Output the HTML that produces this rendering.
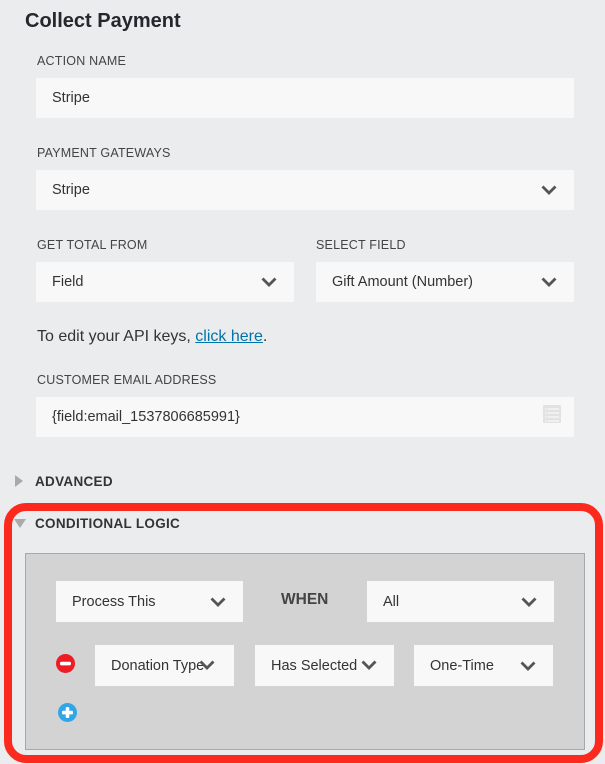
<!DOCTYPE html>
<html><head><style>
*{margin:0;padding:0;box-sizing:border-box}
body{width:605px;height:764px;background:#ebecee;font-family:"Liberation Sans",Arial,sans-serif;position:relative;overflow:hidden;color:#3a3a3a}
.a{position:absolute}
.lbl{position:absolute;left:37px;font-size:12.5px;color:#444;letter-spacing:.2px}
.in{position:absolute;background:#f8f8f8;font-size:14.5px;color:#333;padding-left:16px;display:flex;align-items:center}
.chev{position:absolute;right:17px;top:50%;margin-top:-5px}
.hd{position:absolute;font-size:13.5px;font-weight:bold;color:#333;letter-spacing:.3px}
</style></head><body>
<div class="a" style="left:25px;top:10px;font-size:20px;font-weight:bold;color:#23282d">Collect Payment</div>

<div class="lbl" style="top:54px">ACTION NAME</div>
<div class="in" style="left:36px;top:78px;width:538px;height:40px">Stripe</div>

<div class="lbl" style="top:146px">PAYMENT GATEWAYS</div>
<div class="in" style="left:36px;top:170px;width:538px;height:40px">Stripe<svg class="chev" width="16" height="10" viewBox="0 0 16 10"><path d="M1.5 1.5l6.5 6.5 6.5-6.5" stroke="#555" stroke-width="2.8" fill="none"/></svg></div>

<div class="lbl" style="top:238px">GET TOTAL FROM</div>
<div class="lbl" style="top:238px;left:316px">SELECT FIELD</div>
<div class="in" style="left:36px;top:262px;width:258px;height:40px">Field<svg class="chev" width="16" height="10" viewBox="0 0 16 10"><path d="M1.5 1.5l6.5 6.5 6.5-6.5" stroke="#555" stroke-width="2.8" fill="none"/></svg></div>
<div class="in" style="left:316px;top:262px;width:258px;height:40px">Gift Amount (Number)<svg class="chev" width="16" height="10" viewBox="0 0 16 10"><path d="M1.5 1.5l6.5 6.5 6.5-6.5" stroke="#555" stroke-width="2.8" fill="none"/></svg></div>

<div class="a" style="left:37px;top:328px;font-size:16px;color:#333">To edit your API keys, <span style="color:#0073aa;text-decoration:underline">click here</span>.</div>

<div class="lbl" style="top:373px">CUSTOMER EMAIL ADDRESS</div>
<div class="in" style="left:36px;top:397px;width:538px;height:40px">{field:email_1537806685991}
<svg class="a" style="left:507px;top:8px" width="18" height="18" viewBox="0 0 18 18"><rect x="0" y="0" width="18" height="18" rx="1" fill="#e2e2e2"/><g stroke="#f5f5f5" stroke-width="1.6"><path d="M2 4h14M2 8h14M2 12h14M2 16h14"/></g><path d="M4 2v15" stroke="#e2e2e2" stroke-width="1"/></svg></div>

<svg class="a" style="left:15px;top:475px" width="9" height="12"><path d="M0 0l8 6-8 6z" fill="#aaa"/></svg>
<div class="hd" style="left:35px;top:474px">ADVANCED</div>

<div class="a" style="left:4px;top:503px;width:599px;height:260px;border:8px solid #fc2a1e;border-radius:22px"></div>
<svg class="a" style="left:14px;top:519px" width="12" height="9"><path d="M0 0h12l-6 9z" fill="#aaa"/></svg>
<div class="hd" style="left:35px;top:516px">CONDITIONAL LOGIC</div>

<div class="a" style="left:25px;top:553px;width:560px;height:197px;background:#d3d3d3;border:1px solid #a8a8a8"></div>

<div class="in" style="left:56px;top:581px;width:187px;height:41px">Process This<svg class="chev" width="16" height="10" viewBox="0 0 16 10"><path d="M1.5 1.5l6.5 6.5 6.5-6.5" stroke="#555" stroke-width="2.8" fill="none"/></svg></div>
<div class="a" style="left:281px;top:591px;font-size:15.5px;font-weight:bold;color:#444">WHEN</div>
<div class="in" style="left:367px;top:581px;width:187px;height:41px">All<svg class="chev" width="16" height="10" viewBox="0 0 16 10"><path d="M1.5 1.5l6.5 6.5 6.5-6.5" stroke="#555" stroke-width="2.8" fill="none"/></svg></div>

<svg class="a" style="left:56px;top:654px" width="19" height="19"><circle cx="9.5" cy="9.5" r="9.5" fill="#ee1c24"/><rect x="4" y="7.8" width="11" height="3.6" rx="1.5" fill="#fff"/></svg>
<div class="in" style="left:95px;top:645px;width:139px;height:41px">Donation Type<svg class="a" style="left:104px;top:15px" width="16" height="10" viewBox="0 0 16 10"><path d="M1.5 1.5l6.5 6.5 6.5-6.5" stroke="#555" stroke-width="2.8" fill="none"/></svg></div>
<div class="in" style="left:255px;top:645px;width:139px;height:41px">Has Selected<svg class="a" style="left:106px;top:15px" width="16" height="10" viewBox="0 0 16 10"><path d="M1.5 1.5l6.5 6.5 6.5-6.5" stroke="#555" stroke-width="2.8" fill="none"/></svg></div>
<div class="in" style="left:414px;top:645px;width:139px;height:41px">One-Time<svg class="chev" width="16" height="10" viewBox="0 0 16 10"><path d="M1.5 1.5l6.5 6.5 6.5-6.5" stroke="#555" stroke-width="2.8" fill="none"/></svg></div>

<svg class="a" style="left:58px;top:703px" width="19" height="19"><circle cx="9.5" cy="9.5" r="9.5" fill="#31a6e6"/><rect x="4" y="7.8" width="11" height="3.6" rx="1.3" fill="#fff"/><rect x="7.7" y="4" width="3.6" height="11" rx="1.3" fill="#fff"/></svg>
</body></html>
